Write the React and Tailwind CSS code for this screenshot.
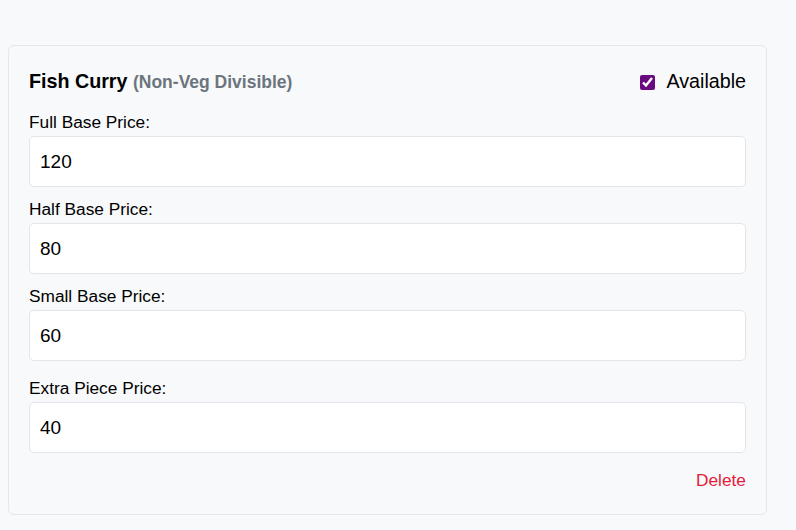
import { useState } from "react";

const fields = [
  { name: "full", label: "Full Base Price:", value: "120" },
  { name: "half", label: "Half Base Price:", value: "80" },
  { name: "small", label: "Small Base Price:", value: "60" },
];

function PriceField({ label, value, onChange }) {
  return (
    <div className="flex flex-col">
      <label className="text-[17.3px] leading-[24px] text-black mb-[2px]">{label}</label>
      <input
        type="text"
        value={value}
        onChange={onChange}
        className="h-[51px] w-full px-[10px] rounded-[5px] border border-[#e2e6ea] bg-white text-[19px] text-black focus:outline-none"
      />
    </div>
  );
}

export default function App() {
  const [available, setAvailable] = useState(true);
  const [prices, setPrices] = useState({ full: "120", half: "80", small: "60", extra: "40" });

  const update = (key) => (e) => setPrices({ ...prices, [key]: e.target.value });

  return (
    <div
      className="min-h-[530px] bg-[#f8f9fa] pt-[45px] pl-2 pr-[29px] pb-4"
      style={{ fontFamily: '"Liberation Sans", Arial, sans-serif' }}
    >
      <div className="w-[759px] rounded-[6px] border border-[#e3e6ea] bg-[#f8f9fa] px-5 pt-[22px] pb-[22px]">
        <div className="flex items-center justify-between h-[28px] mb-[14px]">
          <h3 className="text-[19.7px] font-bold text-black">
            Fish Curry{" "}
            <span className="text-[17.5px] text-[#6c757d]">(Non-Veg Divisible)</span>
          </h3>
          <label className="flex items-center gap-[11px] text-[19.7px] text-black">
            <input
              type="checkbox"
              checked={available}
              onChange={() => setAvailable(!available)}
              className="w-[15px] h-[15px] m-0 accent-[#6a0a80]"
            />
            Available
          </label>
        </div>

        <div className="flex flex-col gap-[10px]">
          {fields.map((f) => (
            <PriceField key={f.name} label={f.label} value={prices[f.name]} onChange={update(f.name)} />
          ))}
        </div>

        <div className="mt-[15px]">
          <PriceField label="Extra Piece Price:" value={prices.extra} onChange={update("extra")} />
        </div>

        <div className="flex justify-end mt-[15px]">
          <button className="text-[17.3px] leading-[24px] text-[#e41b3a] bg-transparent">Delete</button>
        </div>
      </div>
    </div>
  );
}
